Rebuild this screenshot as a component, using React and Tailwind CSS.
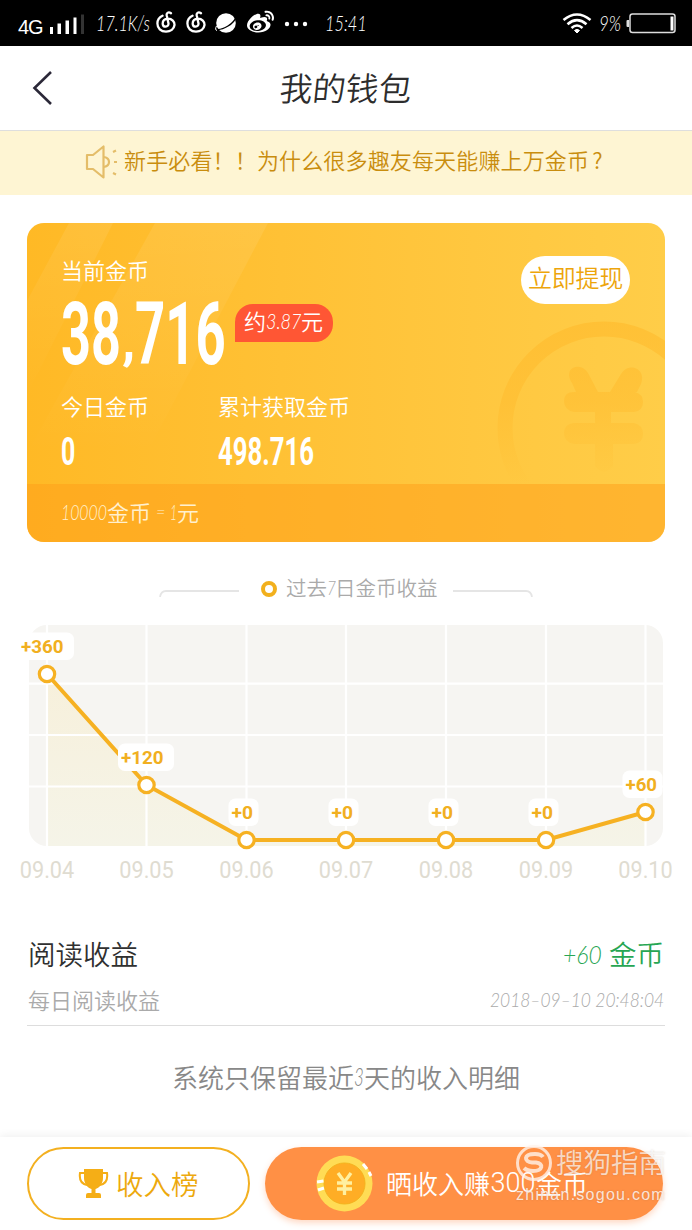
import React from "react";
import { FaWeibo } from "react-icons/fa";

// Slanted, narrow digits inside a box of fixed width.
function Hand({ box, inner, children }) {
  return (
    <span className={"inline-block whitespace-nowrap font-['Lato','Noto_Sans_CJK_SC',sans-serif] italic " + box}>
      <span className={"inline-block origin-left " + inner}>{children}</span>
    </span>
  );
}

function MusicIcon({ className }) {
  return (
    <svg className={"h-[22px] w-[20px] " + className} viewBox="0 0 20 22" fill="none" stroke="#fff" strokeWidth="2.300" strokeLinecap="round">
      <path d="M15 2.200C12.500 .5 10.300 1.800 10.700 4.200L12.500 12.500C12.700 16.500 7 16.700 6.700 12.800C6.600 10 8.700 8 12 7.700C16 7.800 18.700 10.500 18.500 14C18 18 14.500 20.600 10 20.600C4.800 20.600 1.400 17.200 1.400 12.500C1.400 9 3.300 6.300 6.500 4.800" />
    </svg>
  );
}

function StatusBar() {
  return (
    <div className="flex h-[46px] items-center bg-black pt-px pl-[18px] text-white">
      <span className="w-[32px] pt-[6px] font-['Liberation_Sans',sans-serif] text-[20px] leading-5 tracking-[-1.2px]">4G</span>
      <svg className="h-[22px] w-[36px]" viewBox="0 0 36 22" fill="#fff">
        <path d="M0 14h3v7H0zM7.500 10.500h3.500v10.500H7.500zM15.500 7.500h3.500v13.500h-3.500zM23.500 4.500h3v16.500h-3z" />
        <path d="M31 1.500h3v19.500h-3z" fill="#333" />
      </svg>
      <Hand box="ml-[10px] w-[60px] pb-[2px] text-[21px] leading-6 font-light" inner="scale-x-[.77]">17.1K/s</Hand>
      <MusicIcon className="-mt-[3px]" />
      <MusicIcon className="-mt-[3px] ml-[10px]" />
      <svg className="-mt-[2px] ml-[9px] h-[22px] w-[23px]" viewBox="0 0 23 22">
        <circle cx="11" cy="11" r="9.800" fill="#fff" />
        <path d="M2 17.500C8 18 19 12 21 5" fill="none" stroke="#000" strokeWidth="1.300" />
        <path d="M1.500 14Q-.5 18 2 18.500" fill="none" stroke="#fff" strokeWidth="1" />
      </svg>
      <FaWeibo className="-mt-[2px] ml-[9px] size-[27px]" />
      <svg className="ml-[9px] h-[6px] w-[26px]" viewBox="0 0 26 6" fill="#fff">
        <circle cx="4" cy="3" r="2.200" /><circle cx="13" cy="3" r="2.200" /><circle cx="22" cy="3" r="2.200" />
      </svg>
      <Hand box="ml-[16px] w-[42px] pb-px text-[21px] leading-6 font-light" inner="scale-x-[.78]">15:41</Hand>
      <svg className="ml-auto h-[21px] w-[30px]" viewBox="0 0 30 21" fill="none" stroke="#fff" strokeWidth="2.600">
        <path d="M1.500 7Q15 -4 28.500 7M5.500 11.200Q15 3.200 24.500 11.200M9.500 15Q15 10 20.500 15" />
        <path d="M12.500 17.500Q15 15.200 17.500 17.500L15 20z" fill="#fff" strokeWidth="1" />
      </svg>
      <Hand box="ml-[7px] w-[27px] pb-[2px] text-[21px] leading-6 font-light" inner="scale-x-[.81]">9%</Hand>
      <svg className="mr-[15px] h-[22px] w-[51px]" viewBox="0 0 51 22">
        <rect x="4" y="1" width="45" height="18.500" rx="2.500" fill="none" stroke="#ddd" strokeWidth="1.500" />
        <path d="M3 7H1.500Q.5 7 .5 8V13Q.5 14 1.500 14H3z" fill="#ddd" />
        <path d="M44.500 3.500h3v14h-3z" fill="#fff" />
      </svg>
    </div>
  );
}

const BALANCE = "font-['Roboto',sans-serif] font-bold";

function WalletCard() {
  return (
    <section className="relative mx-[27px] mt-[28px] h-[319px] overflow-hidden rounded-[17px] bg-gradient-to-r from-[#ffb925] to-[#ffcd48] text-white">
      <svg className="absolute inset-0 h-full w-full" viewBox="0 0 638 319">
        <defs>
          <linearGradient id="fade" x1="0" y1="97" x2="0" y2="261" gradientUnits="userSpaceOnUse">
            <stop offset="0" stopColor="#ffb829" stopOpacity=".55" />
            <stop offset=".5" stopColor="#ffb829" stopOpacity=".42" />
            <stop offset="1" stopColor="#ffb829" stopOpacity="0" />
          </linearGradient>
          <linearGradient id="ray" x1="0" y1="0" x2="0" y2="1">
            <stop offset="0" stopColor="#fff" stopOpacity=".08" />
            <stop offset="1" stopColor="#fff" stopOpacity="0" />
          </linearGradient>
        </defs>
        <path d="M42 0H86L0 172V78z" fill="url(#ray)" />
        <path d="M128 0H241L120 230H0z" fill="url(#ray)" />
        <circle cx="577" cy="205" r="99" strokeWidth="15" fill="none" stroke="url(#fade)" />
        <path
          fill="url(#fade)"
          d="M545 160C535 144 554 138 561 150L571 169H583L594 151C602 138 620 146 614 161L610 169H608Q616 171 616 179Q616 188 607 189H584V200H607Q616 202 616 211Q616 220 607 221H586V243Q577 254 568 243V221H547Q537 219 537 210Q537 201 547 200H568V189H547Q537 187 537 178Q537 169 547 169H549z"
        />
      </svg>
      <div className="relative flex h-full flex-col">
        <div className="flex h-[261px] flex-col pl-[34px]">
          <div className="flex h-[147px] justify-between pr-[35px]">
            <div>
              <div className="mt-[32px] h-[31px] text-[22px] leading-[28px]">当前金币</div>
              <div className="flex">
                <div className={BALANCE + " flex h-[84px] w-[174px] text-[87px] leading-[97px] whitespace-nowrap"}>
                  <span className="w-[61px]"><span className="inline-block origin-left scale-x-[.6]">38</span></span>
                  <span className="w-[13px] text-[54px] leading-[107px]"><span className="inline-block origin-left scale-x-100">,</span></span>
                  <span className="w-[100px]"><span className="inline-block origin-left scale-x-[.605]">716</span></span>
                </div>
                <div className="mt-[18px] flex h-[38px] w-[98px] items-center rounded-[18px] rounded-bl-none bg-[#ff5634] pb-[5px] pl-[9px] text-[22px]">
                  约<Hand box="w-[35px]" inner="scale-x-[.82] font-light">3.87</Hand>元
                </div>
              </div>
            </div>
            <button className="mt-[33px] h-[48px] w-[109px] rounded-[24px] bg-white pb-[7px] text-[24px] leading-[40px] tracking-[-.2px] text-[#eda50b]">立即提现</button>
          </div>
          <div className="mt-[21px] flex">
            <div className="w-[157px]">
              <div className="text-[22px] leading-[28px]">今日金币</div>
              <div className={BALANCE + " mt-[10px] text-[39px] leading-[46px]"}>
                <span className="inline-block origin-left scale-x-[.64]">0</span>
              </div>
            </div>
            <div>
              <div className="text-[22px] leading-[28px]">累计获取金币</div>
              <div className={BALANCE + " mt-[10px] w-[100px] text-[39px] leading-[46px] whitespace-nowrap"}>
                <span className="inline-block origin-left scale-x-[.66]">498.716</span>
              </div>
            </div>
          </div>
        </div>
        <div className="flex h-[58px] items-center bg-[#ff9d18]/50 pb-[3px] pl-[34px] text-[22px] text-[#fff0cf]">
          <Hand box="w-[46px] font-light" inner="scale-x-[.72]">10000</Hand>金币
          <Hand box="ml-[5px] w-[11px] text-[18px] font-light" inner="scale-x-[.9]">=</Hand>
          <Hand box="ml-[3px] w-[7px] font-light" inner="scale-x-[.55]">1</Hand>元
        </div>
      </div>
    </section>
  );
}

const POINTS = [
  { x: 47, y: 64, label: "+360", bx: 18, bw: 56, date: "09.04" },
  { x: 146.500, y: 175, label: "+120", bx: 118, bw: 56, date: "09.05" },
  { x: 246.500, y: 230, label: "+0", bx: 228.500, bw: 30, date: "09.06" },
  { x: 346, y: 230, label: "+0", bx: 328.500, bw: 30, date: "09.07" },
  { x: 446, y: 230, label: "+0", bx: 428.500, bw: 30, date: "09.08" },
  { x: 546, y: 230, label: "+0", bx: 528.500, bw: 30, date: "09.09" },
  { x: 645.500, y: 202, label: "+60", bx: 622.500, bw: 40, date: "09.10" },
];

function Chart() {
  const line = POINTS.map((p) => p.x + "," + p.y).join(" ");
  return (
    <svg className="block h-[280px] w-[692px]" viewBox="0 0 692 280">
      <defs>
        <clipPath id="plot"><rect x="29" y="15" width="634" height="221" rx="18" /></clipPath>
        <linearGradient id="area" x1="0" y1="0" x2="0" y2="1">
          <stop offset="0" stopColor="#f7f0db" /><stop offset="1" stopColor="#f5f4e8" />
        </linearGradient>
      </defs>
      <g clipPath="url(#plot)">
        <rect x="29" y="15" width="634" height="221" fill="#f6f5f2" />
        <polygon points={"47,236 " + line + " 645.5,236"} fill="url(#area)" />
        <g stroke="#fff" strokeWidth="2.200">
          {POINTS.map((p) => <path key={p.x} d={"M" + p.x + " 15V236"} />)}
          <path d="M29 73.700H663M29 125H663M29 176.500H663" />
        </g>
      </g>
      <polyline points={line} fill="none" stroke="#f6b122" strokeWidth="4" />
      {POINTS.map((p) => (
        <g key={p.date}>
          <rect x={p.bx} y={p.y - 41.500} width={p.bw} height="27.500" rx="7" fill="#fff" />
          <text x={p.bx + 3} y={p.y - 21} fill="#f1af20" className="font-['Roboto',sans-serif] text-[19px] font-bold" textLength={p.label.length === 4 ? 42.5 : p.label.length === 3 ? 31.5 : 21.5} lengthAdjust="spacingAndGlyphs">{p.label}</text>
          <circle cx={p.x} cy={p.y} r="7.700" fill="#fff" stroke="#f6b122" strokeWidth="3.200" />
          <text x={p.x} y="268" textAnchor="middle" fill="#dfdcd1" className="font-['Roboto',sans-serif] text-[23.500px] font-normal" textLength="54.500" lengthAdjust="spacingAndGlyphs">{p.date}</text>
        </g>
      ))}
    </svg>
  );
}

function ActionBar() {
  return (
    <footer className="flex h-[93px] items-start gap-[15px] bg-white pt-[10px] pl-[27px] shadow-[0_-2px_8px_rgba(0,0,0,.06)]">
      <button className="flex h-[73px] w-[223px] items-center rounded-full border-2 border-[#f3b020] pl-[49px] text-[27.500px] text-[#eda90d]">
        <svg className="mr-[7px] h-[30px] w-[31px]" viewBox="0 0 31 30" fill="#f5ae16">
          <path d="M6 0H25V9C25 15 21 19 17.500 20V24H21Q23 24 23 26V29H8V26Q8 24 10 24H13.500V20C10 19 6 15 6 9z" />
          <path d="M7 4H2C1 11 4 15 9 16M24 4H29C30 11 27 15 22 16" fill="none" stroke="#f5ae16" strokeWidth="2" />
        </svg>
        收入榜
      </button>
      <div className="relative">
        <button className="flex h-[73px] w-[398px] items-center rounded-full bg-[#ff9045] pl-[51px] text-[26px] text-white shadow-[0_3px_6px_rgba(255,130,60,.3)]">
          <svg className="mr-[13px] h-[57px] w-[57px]" viewBox="0 0 57 57">
            <circle cx="28.500" cy="28.500" r="28" fill="#ffdc55" />
            <circle cx="28.500" cy="28.500" r="20.500" fill="#ffad25" stroke="#f5b21d" strokeWidth="1" />
            <path d="M22 18L28.500 27L35 18M21 28H36M21 34H36M28.500 27V40" fill="none" stroke="#fff0a0" strokeWidth="3.300" />
            <path d="M1 27L7.500 26M2 35L8 33M47 9L51 14M53 17L55 21" stroke="#fff" strokeWidth="3" />
          </svg>
          <span className="pb-[2px]">晒收入赚</span>
          <span className="w-[46px] font-['Roboto',sans-serif] text-[27px] font-[350]">300</span>
          <span className="pb-[2px]">金币</span>
        </button>
        <div className="absolute top-[-4px] left-[250px] w-[154px] text-white/70">
          <div className="flex h-[40px] items-center">
            <svg className="h-[38px] w-[38px] shrink-0" viewBox="0 0 38 38" fill="none" stroke="#fff3eb" strokeOpacity=".8">
              <circle cx="19" cy="19" r="16.500" strokeWidth="3" />
              <path d="M28 13Q26 10 20 10C8 10 9 18 17 18.500H21C29 19.500 28 27 18 27Q12 27 9 24" strokeWidth="4" />
            </svg>
            <span className="ml-[3px] pb-[4px] text-[27.500px] leading-8 whitespace-nowrap [text-shadow:0_0_2px_rgba(120,90,70,.25)]">搜狗指南</span>
          </div>
          <div className="ml-px mt-[2px] font-['Liberation_Sans',sans-serif] text-[16px] leading-[20px] tracking-[1.250px] whitespace-nowrap text-[#fff0e8]/90 [text-shadow:0_0_2px_rgba(120,90,70,.3)]">zhinan.sogou.com</div>
        </div>
      </div>
    </footer>
  );
}

export default function App() {
  return (
    <main className="flex h-[1230px] w-[692px] flex-col overflow-hidden bg-white font-['Noto_Sans_CJK_SC',sans-serif] font-[350]">
      <StatusBar />
      <header className="relative flex h-[85px] items-center justify-center border-b border-[#dedede]">
        <svg className="absolute top-[24px] left-[31px] h-[36px] w-[23px]" viewBox="0 0 23 36">
          <path d="M20 2L3.500 18L20 34" fill="none" stroke="#2b2838" strokeWidth="2.600" />
        </svg>
        <h1 className="-skew-x-6 text-[33px] font-[350] text-[#2d2d2d]">我的钱包</h1>
      </header>
      <div className="flex h-[64px] items-center pb-[3px] bg-[#fef5d3] pl-[85px] text-[22px] text-[#c98d0e]">
        <svg className="mr-[6px] h-[34px] w-[33px]" viewBox="0 0 33 34" fill="none" stroke="#e4bd69" strokeWidth="2.200">
          <path d="M2 10H8L18.500 1.500V32.500L8 24H2z" strokeLinejoin="round" />
          <path d="M19 12Q24 13 24 17T19 22" />
          <path d="M28 7L31 5.500M29 17H32M28 28L31 29.500" />
        </svg>
        <span className="pb-[4px] tracking-[.15px]">新手必看！！为什么很多趣友每天能赚上万金币<span className="ml-[3px]">?</span></span>
      </div>
      <WalletCard />
      <div className="mt-[34px] flex h-[26px] items-center pl-[158px] text-[20.500px] text-[#aaa]">
        <svg className="mt-[8px] h-[8px] w-[82px]" viewBox="0 0 82 8"><path d="M2 8Q3 2 8 2H81" fill="none" stroke="#e5e5e5" strokeWidth="1.800" /></svg>
        <svg className="ml-[20px] h-[18px] w-[18px]" viewBox="0 0 18 18"><circle cx="9" cy="9" r="6" fill="#fff" stroke="#f2b01d" strokeWidth="4" /></svg>
        <span className="ml-[8px] flex w-[167px] items-center pb-[4px] leading-6">
          过去<Hand box="w-[8px] font-light" inner="scale-x-[.75]">7</Hand>日金币收益
        </span>
        <svg className="mt-[8px] h-[8px] w-[82px]" viewBox="0 0 82 8"><path d="M0 2H73Q78 2 79 8" fill="none" stroke="#e5e5e5" strokeWidth="1.800" /></svg>
      </div>
      <div className="mt-[8px]"><Chart /></div>
      <section className="mx-[27px] mt-[44px] h-[92px] border-b border-[#ddd]">
        <div className="flex h-[40px] items-center justify-between text-[27.500px] text-[#303030]">
          <span className="pl-px">阅读收益</span>
          <span className="flex items-center pr-px text-[#27a653]">
            <Hand box="w-[46px] text-[26px] font-light" inner="scale-x-[.88]">+60</Hand>金币
          </span>
        </div>
        <div className="mt-[5px] flex h-[40px] items-center justify-between text-[22px] text-[#aaa]">
          <span className="pl-px">每日阅读收益</span>
          <Hand box="w-[175px] text-[20px] font-light" inner="scale-x-[.87]">2018–09–10 20:48:04</Hand>
        </div>
      </section>
      <p className="mt-[30px] flex h-[40px] items-center justify-center text-[26px] text-[#888]">
        系统只保留最近<Hand box="w-[10px] font-light" inner="scale-x-[.65]">3</Hand>天的收入明细
      </p>
      <div className="mt-auto"><ActionBar /></div>
    </main>
  );
}
